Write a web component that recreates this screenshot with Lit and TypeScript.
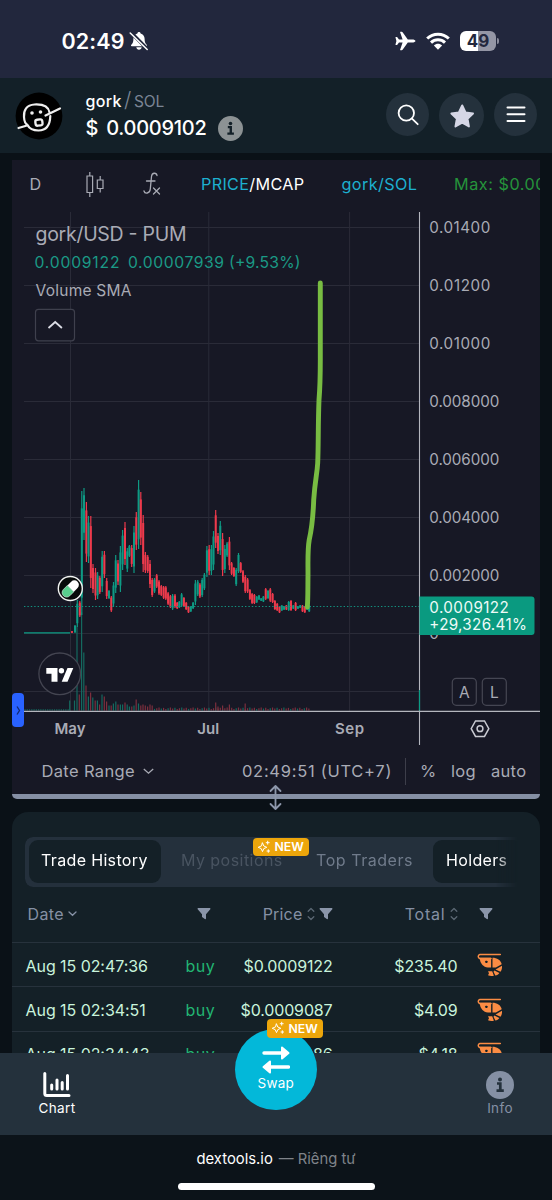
import { LitElement, html, css, svg } from "lit";
import { customElement } from "lit/decorators.js";

type Candle = [number, number, number, 0 | 1];

// x, high, low, direction (1 = up)
const CANDLES: Candle[] = [
  [72, 631, 633, 0], [75, 625, 633, 1], [77.3, 600, 627, 1], [79.8, 601, 617, 0],
  [81.8, 491, 615, 1], [84, 488, 540, 1], [86.4, 502, 562, 0], [88.5, 516, 563, 1],
  [90.8, 516, 588, 0], [93, 564, 593, 0], [95.5, 568, 600, 0], [97.6, 572, 599, 1],
  [99.8, 576, 594, 0], [102.2, 551, 592, 1], [104.4, 551, 578, 0], [106.7, 578, 599, 0],
  [109, 590, 599, 1], [111.3, 596, 612, 0], [113.5, 582, 607, 1], [115.7, 555, 593, 1],
  [118, 560, 585, 0], [120.4, 546, 592, 1], [122.6, 530, 570, 1], [125, 522, 565, 0],
  [127.3, 548, 572, 1], [129.4, 545, 557, 1], [131.7, 545, 567, 0], [134, 526, 573, 1],
  [136.3, 512, 550, 0], [138.6, 480, 549, 1], [140.8, 492, 545, 0], [143.2, 515, 572, 0],
  [145.4, 552, 573, 0], [147.7, 555, 573, 0], [150, 560, 588, 0], [152.2, 578, 597, 0],
  [154.5, 578, 593, 1], [156.7, 574, 588, 0], [159, 580, 595, 0], [161.3, 585, 596, 0],
  [163.6, 586, 599, 0], [165.8, 586, 600, 0], [168.1, 592, 605, 0], [170.4, 595, 608, 0],
  [172.6, 594, 610, 1], [175, 594, 608, 0], [177.2, 602, 609, 0], [179.3, 601, 608, 1],
  [181.6, 593, 607, 1], [183.9, 597, 607, 0], [186.2, 602, 610, 0], [188.5, 606, 613, 0],
  [190.8, 606, 612, 1], [193.1, 602, 609, 1], [195.4, 580, 605, 1], [197.7, 580, 596, 1],
  [199.9, 583, 598, 0], [202.2, 578, 597, 1], [204.4, 573, 590, 1], [206.9, 546, 577, 1],
  [209.2, 545, 575, 0], [211.4, 545, 575, 1], [213.5, 531, 570, 1], [215.7, 510, 548, 0],
  [218, 533, 554, 0], [220.3, 521, 555, 1], [222.6, 533, 576, 0], [224.8, 545, 573, 1],
  [227.1, 542, 557, 1], [229.4, 537, 570, 0], [231.6, 562, 575, 0], [233.9, 567, 577, 0],
  [236.2, 568, 586, 1], [238.5, 553, 573, 1], [240.7, 562, 573, 0], [243, 570, 583, 0],
  [245.3, 575, 593, 0], [247.6, 578, 593, 0], [249.9, 589, 600, 0], [252.1, 593, 604, 0],
  [254.4, 594, 604, 0], [256.7, 596, 603, 1], [259, 595, 600, 1], [261.2, 598, 601, 1],
  [263.4, 596, 602, 1], [265.7, 588, 600, 0], [268, 590, 599, 1], [270.3, 588, 602, 0],
  [272.6, 593, 603, 0], [274.9, 600, 610, 0], [277.2, 603, 611, 0], [279.5, 606, 613, 0],
  [281.8, 605, 611, 1], [284.1, 606, 610, 1], [286.4, 605, 610, 0], [288.7, 601, 611, 1],
  [291, 600, 611, 0], [293.3, 605, 609, 1], [295.6, 602, 611, 0], [297.9, 606, 609, 1],
  [300.2, 605, 608, 1], [302.5, 605, 612, 0], [304.8, 606, 613, 0], [307, 605, 610, 1],
  [309.2, 605, 612, 1],
];

// x, height, direction
const VOLUMES: [number, number, 0 | 1][] = [
  [69.7, 10, 1], [74.5, 10, 1], [77, 84, 1], [79.3, 16, 0], [81.6, 98, 1], [83.8, 58, 1],
  [86, 25, 0], [88.4, 14, 1], [90.6, 18, 0], [92.8, 13, 1], [95.2, 10, 0], [97.4, 10, 1],
  [99.6, 6, 0], [102, 16, 1], [104.3, 14, 0], [106.6, 9, 0], [109, 5, 1], [111.2, 5, 0],
  [113.4, 7, 1], [115.8, 9, 1], [118, 6, 0], [120.4, 6, 1], [122.6, 6, 1], [125, 8, 0],
  [127.2, 6, 1], [129.4, 4, 1], [131.8, 4, 0], [134, 5, 1], [136.2, 11, 0], [138.5, 7, 1],
  [140.8, 5, 0], [143, 6, 0], [145.3, 5, 0], [147.6, 4, 0], [150, 6, 0], [152.2, 5, 0],
  [215.7, 8, 0], [218, 4, 0], [222.6, 5, 0], [229.4, 6, 0], [245.2, 7, 0],
];

const TICKS: [number, string, number][] = [
  [227.3, "0.01400", 61], [285.3, "0.01200", 61], [343.4, "0.01000", 61], [401.5, "0.008000", 70],
  [459.5, "0.006000", 70], [517.5, "0.004000", 70], [575.5, "0.002000", 70], [633.4, "0", 9],
];

const sparkle = html`<svg width="14" height="14" viewBox="0 0 14 14" fill="none" stroke="#fff" stroke-width="1" stroke-linejoin="round" stroke-linecap="round"><path d="M5.5 3 6.8 6 9.8 7.3 6.8 8.6 5.5 11.6 4.2 8.6 1.2 7.3 4.2 6Z"/><path d="M10.7 1.2v3M9.2 2.7h3M11.3 9.7v2.6M10 11h2.6"/></svg>`;
const newBadge = html`${sparkle}<span>NEW</span>`;
const funnel = html`<svg width="14" height="13" viewBox="0 0 14 13"><path fill="#8a95a9" d="M1.3 1h11.4c.8 0 1 .8.6 1.3L9 7.3v4.2c0 .7-.7 1-1.2.6L5.4 10.3C5.1 10.1 5 9.8 5 9.5V7.3L.7 2.3C.3 1.8.5 1 1.3 1Z"/></svg>`;
const sorter = html`<svg width="8" height="14" viewBox="0 0 8 14" fill="none" stroke="#5b6773" stroke-width="1.3" stroke-linecap="round" stroke-linejoin="round"><path d="M1.2 4.2 4 1.500 6.800 4.200M1.200 9.800 4 12.500 6.800 9.800"/></svg>`;
const shrimp = html`<svg width="27" height="25" viewBox="0 0 27 25"><path d="M24.300 1.500H3.800a2 2 0 0 0 0 3.900H15" fill="none" stroke="#fb8c44" stroke-width="1.500" stroke-linecap="round"/><g fill="#fb8c44"><path d="M3.600 4.800H15.100V14.600H11.800C7.500 14.300 4 10.500 3.600 4.800Z"/><path d="M16.500 4.800c4.500 0 8.200 2.400 9.200 6.400L19.900 14.600H16.500Z"/><path d="M26 12.800c.2 2.300-.3 4.300-1.500 6l-5-2.300Z"/><path d="m18.400 17.600 5 2.300c-1.100 1.400-2.300 2.200-4 2.700l-1.900-3.900Z"/><path d="M12 18.300h4.200l1.700 4.400c-2.100.4-4.100.3-5.900-.4l1-2Z"/></g><rect x="9.300" y="7.700" width="2.200" height="2.200" rx=".6" fill="#142027"/></svg>`;
const infoGlyph = (d: number, disc: string, ink: string) => html`<svg width=${d} height=${d} viewBox="0 0 28 28"><circle cx="14" cy="14" r="14" fill=${disc}/><circle cx="14" cy="8.400" r="2" fill=${ink}/><path d="M11 12.500h3.300v6.700M10.500 19.700h7.300" fill="none" stroke=${ink} stroke-width="2.700"/></svg>`;

@customElement("status-bar")
class StatusBar extends LitElement {
  static styles = css`
    :host { display: flex; height: 77.5px; background: #22273d; color: #fff; align-items: center; box-sizing: border-box; padding: 4px 53px 0 61.5px; font-family: Inter, sans-serif; }
    svg { display: block; flex: none; }
    .time { font-size: 21.5px; font-weight: 600; letter-spacing: .1px; width: 67px; }
    .space { flex: 1; }
    .wifi { margin: 0 10px 0 10px; }
    .battery { display: flex; align-items: center; justify-content: center; width: 36px; height: 19.5px; border-radius: 6px; background: linear-gradient(90deg, #fff 50%, #9496a5 50%); color: #22273d; font-size: 17px; font-weight: 700; line-height: 20px; }
    .nub { width: 2px; height: 6px; margin-left: 1px; border-radius: 0 2px 2px 0; background: #8a8c9c; }
  `;
  render() {
    return html`
      <span class="time">02:49</span>
      <svg width="20" height="20" viewBox="0 0 20 20"><path fill="#fff" d="M10 1c.9 0 1.500.6 1.600 1.400 2.500.7 4 2.800 4 5.400 0 3.500.7 4.700 2.100 6 .6.600.3 1.400-.5 1.400H2.800c-.8 0-1.100-.8-.5-1.400 1.400-1.300 2.100-2.500 2.100-6 0-2.600 1.500-4.700 4-5.400C8.500 1.600 9.100 1 10 1ZM7.300 16.300h5.400C12.500 17.800 11.400 18.800 10 18.800s-2.500-1-2.700-2.500Z"/><path d="m2 1.500 16.800 17" stroke="#22273d" stroke-width="3.600"/><path d="m1.200 2 17 16.500" stroke="#fff" stroke-width="1.500" stroke-linecap="round"/></svg>
      <div class="space"></div>
      <svg width="21" height="20" viewBox="0 0 21 20"><path fill="#fff" d="M20.500 10c0 .9-1.600 1.500-3.300 1.500h-4.400L7.600 18.700c-.2.300-.5.500-.9.500H5.400c-.3 0-.4-.2-.3-.5l2.500-7.200H4L2.300 13.700c-.2.300-.4.400-.7.400H.8c-.3 0-.4-.2-.3-.5L1.400 10 .5 6.400c-.1-.3 0-.5.300-.5h.8c.3 0 .5.100.7.400L4 8.500h3.600L5.100 1.300c-.1-.3 0-.5.3-.5h1.300c.4 0 .7.200.9.500l5.200 7.200h4.400c1.700 0 3.300.6 3.300 1.500Z"/></svg>
      <svg class="wifi" width="24" height="18" viewBox="0 0 24 18" fill="none" stroke="#fff" stroke-width="3"><path d="M1.200 6.500C7.200.700 16.800.700 22.800 6.500"/><path d="M5 10.700c4-3.800 10-3.800 14 0"/><path fill="#fff" stroke="none" d="M7.900 13.500c2.400-2.200 5.800-2.200 8.200 0L12 17.700Z"/></svg>
      <div class="battery">49</div><div class="nub"></div>`;
  }
}

@customElement("pair-header")
class PairHeader extends LitElement {
  static styles = css`
    :host { display: flex; height: 75.5px; background: #132028; color: #fff; box-sizing: border-box; padding: 0 15px; font-family: Inter, sans-serif; }
    svg { display: block; }
    .avatar { width: 48px; height: 48px; margin-top: 14.5px; }
    .names { padding: 13px 0 0 22.5px; flex: 1; }
    .pair { display: flex; align-items: baseline; font-size: 16px; line-height: 20px; font-weight: 500; letter-spacing: .35px; }
    .slash { font-size: 21px; line-height: 18px; font-weight: 300; color: #7a8494; padding: 0 2.5px 0 2px; }
    .quote { color: #7a8494; font-weight: 400; font-size: 15.5px; letter-spacing: -.2px; }
    .price { display: flex; align-items: center; height: 33px; font-size: 20px; font-weight: 500; gap: 11px; }
    .amount { white-space: pre; word-spacing: 3px; letter-spacing: -.27px; }
    .btns { display: flex; gap: 10px; padding-top: 15.5px; align-items: flex-start; margin-right: 0; }
    .btn { width: 43px; height: 43px; border-radius: 50%; background: #24313c; display: grid; place-items: center; }
    .star { width: 45px; height: 45px; }
  `;
  render() {
    return html`
      <div class="avatar"><svg width="48" height="48" viewBox="0 0 48 48"><circle cx="24" cy="24" r="23.400" fill="#000"/><g fill="none" stroke="#eee" stroke-width="2.200" stroke-linecap="round" stroke-linejoin="round"><path d="M45 16.500 30.500 23.500M34.500 20.500C33.500 14.500 29 12 19.500 12.500 11.500 13 8.500 18 9 25c.2 4 1 6.500 3.500 8 2 4 5 5.500 11 5.500 7.500 0 11.500-4 11.800-14.500"/><path d="M3.500 36l8.500-2.500"/></g><circle cx="17" cy="21" r="1.800" fill="#eee"/><circle cx="25.500" cy="20" r="1.800" fill="#eee"/><rect x="20.500" y="27.500" width="7" height="6" rx="2" fill="none" stroke="#eee" stroke-width="2.300" transform="rotate(-8 24 31)"/></svg></div>
      <div class="names">
        <div class="pair">gork<span class="slash">/</span><span class="quote">SOL</span></div>
        <div class="price"><span class="amount">$ 0.0009102</span>${infoGlyph(25, "#8c9294", "#132028")}</div>
      </div>
      <div class="btns">
        <div class="btn"><svg width="24" height="24" viewBox="0 0 24 24" fill="none" stroke="#fff" stroke-width="1.800" stroke-linecap="round"><circle cx="10.300" cy="10" r="7.700"/><path d="m16 15.700 5.700 5.500"/></svg></div>
        <div class="btn star"><svg width="28" height="28" viewBox="0 0 28 28"><path d="m14.200 3.500 3.300 7 7.500 1-5.500 5.300 1.400 7.600-6.700-3.700-6.700 3.700 1.400-7.600-5.500-5.300 7.500-1Z" fill="#d5d6e5" stroke="#d5d6e5" stroke-width="2" stroke-linejoin="round"/></svg></div>
        <div class="btn"><svg width="20" height="18" viewBox="0 0 20 18" stroke="#fff" stroke-width="2" stroke-linecap="round"><path d="M1.500 1.500h17M1.500 8.200h17M1.500 15h17"/></svg></div>
      </div>`;
  }
}

@customElement("price-chart")
class PriceChart extends LitElement {
  static styles = css`
    :host { display: block; position: relative; height: 639px; margin: 7px 12px 0; background: #171825; border-radius: 0 0 4px 4px; font-family: Inter, sans-serif; color: #a9abb5; }
    svg { display: block; flex: none; }
    .tools { display: flex; align-items: center; height: 48px; overflow: hidden; font-size: 16.2px; white-space: nowrap; padding-left: 17.5px; box-sizing: border-box; }
    .tools > span { flex: none; }
    .interval { width: 56px; }
    .kind { width: 57px; }
    .fx { width: 58.500px; }
    .metric { width: 140.5px; color: #fff; letter-spacing: .34px; }
    .cyan { color: #1db0d0; }
    .market { width: 112.5px; color: #1db0d0; letter-spacing: .4px; }
    .max { color: #25933b; letter-spacing: .55px; }
    .canvas { width: 528px; height: 538px; }
    .range { display: flex; align-items: center; height: 48px; box-sizing: border-box; padding: 2px 0 0 29.5px; font-size: 16.5px; white-space: nowrap; }
    .dates { letter-spacing: .35px; margin-right: 8px; }
    .clock { margin-left: 88px; width: 163px; letter-spacing: .72px; }
    .rule { width: 1px; height: 27px; background: #3d3e4a; margin-right: 14px; }
    .pct { width: 31px; }
    .log { width: 40px; letter-spacing: .3px; }
    .auto { letter-spacing: .3px; }
    .edge { height: 5px; background: #858fa4; border-radius: 0 0 5px 5px; }
    .grip { position: absolute; left: 256px; bottom: -12px; }
    .drawer { position: absolute; left: 0; top: 533px; width: 12px; height: 34px; border-radius: 4px; background: #2962ff; display: grid; place-items: center; }
  `;

  private candle([x, hi, lo, up]: Candle) {
    const color = up ? "#0e9a84" : "#ee3a4c";
    const span = lo - hi;
    const pad = span > 20 ? span * 0.14 : span * 0.1;
    return svg`<path d="M${x} ${hi}V${lo}" stroke=${color} stroke-width="1.200"/><path d="M${x} ${hi + pad}V${lo - pad}" stroke=${color} stroke-width="2"/>`;
  }

  private bar(x: number, h: number, up: number) {
    return svg`<path d="M${x} 710.500v${-h}" stroke=${up ? "#14695f" : "#7c2f3e"} stroke-width="1.200"/>`;
  }

  render() {
    const tail: number[] = [];
    for (let x = 154.5; x < 311; x += 2.27) tail.push(x);
    const head: number[] = [];
    for (let x = 25; x < 69; x += 2.27) head.push(x);
    return html`
      <div class="tools">
        <span class="interval">D</span>
        <span class="kind"><svg width="18" height="25" viewBox="0 0 18 25" fill="none" stroke="#a9abb5" stroke-width="1.200"><path d="M1 4h5.600v16.500H1ZM3.800 0v4M3.800 20.500V25M11.300 8H17v8.500h-5.700ZM14.200 4v4M14.200 16.500v4"/></svg></span>
        <span class="fx"><svg width="18" height="24" viewBox="0 0 18 24" fill="none" stroke="#a9abb5" stroke-width="1.300" stroke-linecap="round"><path d="M14 3.500C13.500.500 9 .200 8.500 4.500L7.300 17c-.4 5-5.600 5-6.300 2M3.500 9H12M10.500 16l6 6M16.500 16l-6 6"/></svg></span>
        <span class="metric"><span class="cyan">PRICE</span>/MCAP</span>
        <span class="market">gork/SOL</span>
        <span class="max">Max: $0.00</span>
      </div>
      <svg class="canvas" viewBox="12 208 528 538" font-family="Inter, sans-serif">
        <g stroke="#2a2b38" stroke-width="1">
          ${[227.5, 285.5, 343.5, 401.5, 459.5, 517.5, 575.5, 633.5, 691.5].map((y) => svg`<path d=${`M24 ${y}H419`}/>`)}
          ${[70.5, 208.8, 349.6].map((x) => svg`<path d=${`M${x} 212V711`}/>`)}
        </g>
        <path d="M24 632.900H70" stroke="#0c9c84" stroke-width="1.300"/>
        ${head.map((x) => this.bar(x, 1.2, 1))}
        ${tail.map((x, i) => this.bar(x, 1.6 + (i * 7 % 5) * .35, i % 3 === 0 ? 1 : 0))}
        ${VOLUMES.map(([x, h, u]) => this.bar(x, h, u))}
        ${CANDLES.map((c) => this.candle(c))}
        <path d="M24 606.500H419" stroke="#13917f" stroke-width="1.200" stroke-dasharray="1.400 2"/>
        <path d="M320.300 283V350C320.300 378 320.500 382 319 400C318 425 318.500 445 317.700 463C317 475 315 480 313.700 500C313 520 311 532 309.200 540C307.500 550 308 560 308 575C307.800 590 308 600 307.300 607" fill="none" stroke="#78bc42" stroke-width="4.900" stroke-linecap="round" stroke-linejoin="round"/>
        <g stroke="#b4b6be" stroke-width="1.100"><path d="M419.500 212V745"/><path d="M20 711.300H540" stroke-width="1.300"/></g>
        <path d="M419.500 690V710.500" stroke="#0c9c84" stroke-width="1.200"/>
        <text x="35.500" y="240.800" font-size="19.500" fill="#a9abb5" textLength="151">gork/USD - PUM</text>
        <g font-size="15.700" fill="#1b9a86">
          <text x="34.500" y="267.500" textLength="85">0.0009122</text>
          <text x="128" y="267.500" textLength="96">0.00007939</text>
          <text x="229" y="267.500" textLength="71.500">(+9.53%)</text>
        </g>
        <text x="35.500" y="295.500" font-size="15.500" fill="#a9abb5" textLength="96">Volume SMA</text>
        <rect x="35.500" y="309.300" width="39" height="31.500" rx="3" fill="#171825" stroke="#3f404d" stroke-width="1.200"/>
        <path d="m48.500 328 6.700-6 6.700 6" fill="none" stroke="#dcdde5" stroke-width="1.800"/>
        <g font-size="15.200" fill="#a9abb5">
          ${TICKS.map(([y, t, w]) => svg`<text x="429.300" y=${y + 5.8} textLength=${w}>${t}</text>`)}
        </g>
        <path d="M419.500 596.500H531.500a3 3 0 0 1 3 3V632a3 3 0 0 1-3 3H419.500Z" fill="#0a9a80"/>
        <g font-size="15.200" fill="#eefaf7"><text x="429.300" y="613" textLength="79.500">0.0009122</text><text x="429.300" y="630.300" textLength="97.500">+29,326.41%</text></g>
        <g fill="#171825" stroke="#454653" stroke-width="1.200"><rect x="452.300" y="678.300" width="24" height="27" rx="4"/><rect x="482.300" y="678.300" width="24" height="27" rx="4"/></g>
        <g font-size="15.500" fill="#a9abb5" text-anchor="middle"><text x="464.300" y="697.500">A</text><text x="494.300" y="697.500">L</text></g>
        <g font-size="15" font-weight="600" fill="#a9abb5"><text x="54.500" y="734.300" textLength="31">May</text><text x="197.300" y="734.300" textLength="22">Jul</text><text x="335" y="734.300" textLength="29">Sep</text></g>
        <g fill="none" stroke="#c9cad2" stroke-width="1.500"><path d="M475.500 721h9l4.300 7.700-4.300 7.700h-9l-4.300-7.700Z"/><circle cx="480" cy="728.700" r="2.900"/></g>
        <circle cx="59.700" cy="673.800" r="20.800" fill="#171825" stroke="#444551" stroke-width="1.300"/>
        <g fill="#fff"><path d="M46.300 668H57.500V681.700H51.500V673.700H46.300ZM61.700 681.700l5.800-13.700h5.800l-5.800 13.700Z"/><circle cx="61.400" cy="670.700" r="2.700"/></g>
        <circle cx="70.300" cy="588.500" r="12" fill="#070a0a" stroke="#f1f3f1" stroke-width="1.400"/>
        <g transform="rotate(-45 70.500 588.700)"><path d="M70.500 584.200h5.500a4.500 4.500 0 0 1 0 9h-5.500Z" fill="#fff"/><path d="M70.500 584.200H65a4.500 4.500 0 0 0 0 9h5.500Z" fill="#59cf8e" stroke="#d8f4e4" stroke-width=".6"/></g>
      </svg>
      <div class="range">
        <span class="dates">Date Range</span>
        <svg width="11" height="7" viewBox="0 0 11 7" fill="none" stroke="#a9abb5" stroke-width="1.300"><path d="m.8 1 4.700 4.200L10.200 1"/></svg>
        <span class="clock">02:49:51 (UTC+7)</span>
        <span class="rule"></span><span class="pct">%</span><span class="log">log</span><span class="auto">auto</span>
      </div>
      <div class="edge"></div>
      <svg class="grip" width="15" height="27" viewBox="0 0 15 27" fill="none" stroke="#8d97ab" stroke-width="1.800" stroke-linecap="round" stroke-linejoin="round"><path d="M7.500 2v23M2.500 7l5-5 5 5M2.500 20l5 5 5-5"/></svg>
      <div class="drawer"><svg width="5" height="9" viewBox="0 0 5 9" fill="none" stroke="#122a70" stroke-width="1.300"><path d="M1 .5 3.500 4.500 1 8.500"/></svg></div>`;
  }
}

@customElement("trade-table")
class TradeTable extends LitElement {
  static styles = css`
    :host { display: block; margin: 13px 12px 0; height: 241px; overflow: hidden; border-radius: 16px 16px 0 0; background: #142027; font-family: Inter, sans-serif; }
    svg { display: block; }
    .wrap { position: relative; padding: 24.5px 12.5px 0; height: 51px; }
    .tabs { display: flex; align-items: center; height: 50.5px; border-radius: 8px; background: #24303c; box-sizing: border-box; padding: 0 4px; font-size: 16px; white-space: nowrap; -webkit-mask: linear-gradient(90deg, #000 93.5%, transparent 98%); mask: linear-gradient(90deg, #000 93.5%, transparent 98%); color: #707b8b; }
    .tab { flex: none; height: 43px; line-height: 41px; border-radius: 9px; box-sizing: border-box; }
    .on { background: #142027; color: #fff; }
    .history { width: 132.5px; padding-left: 12.5px; letter-spacing: .35px; }
    .mine { color: #495461; padding-left: 20px; width: 155px; letter-spacing: .45px; }
    .top { width: 117px; letter-spacing: .55px; }
    .holders { padding-left: 13px; width: 90px; letter-spacing: .35px; }
    .badge { position: absolute; left: 240.5px; top: 25.5px; display: flex; align-items: center; gap: 4px; box-sizing: border-box; width: 56px; height: 18.5px; border-radius: 4px; padding-left: 4px; background: #eda60b; color: #fff; font-size: 12.3px; font-weight: 600; }
    .row, .head { display: grid; grid-template-columns: 160px 31px 116px 125px 45px; align-items: center; padding-left: 13.5px; border-bottom: 1px solid #27323c; box-sizing: border-box; white-space: nowrap; }
    .head { height: 55.5px; color: #8590a4; font-size: 16px; padding-bottom: 2px; }
    .row { height: 44.4px; color: #c9f4dc; font-size: 16px; padding-top: 2px; }
    .cell { display: flex; align-items: center; }
    .date { gap: 4px; padding-left: 2px; letter-spacing: .4px; }
    .mid { padding-left: 11px; }
    .price { justify-content: flex-end; gap: 4px; letter-spacing: .2px; }
    .total { justify-content: flex-end; gap: 4px; letter-spacing: .8px; }
    .act { padding-left: 21px; }
    .buy { color: #22b573; letter-spacing: .5px; }
    .num { text-align: right; letter-spacing: -.15px; }
    .day { letter-spacing: -.06px; }
    .icon { padding-left: 18.500px; }
  `;
  render() {
    const rows = [
      ["Aug 15 02:47:36", "$0.0009122", "$235.40"],
      ["Aug 15 02:34:51", "$0.0009087", "$4.09"],
      ["Aug 15 02:34:43", "$0.0009086", "$4.18"],
    ];
    return html`
      <div class="wrap">
        <div class="tabs">
          <span class="tab on history">Trade History</span><span class="tab mine">My positions</span><span class="tab top">Top Traders</span><span class="tab on holders">Holders</span>
        </div>
        <div class="badge">${newBadge}</div>
      </div>
      <div class="head">
        <div class="cell date">Date<svg width="9" height="6" viewBox="0 0 9 6" fill="none" stroke="#8590a4" stroke-width="1.300" stroke-linecap="round"><path d="m1 1 3.500 3.300L8 1"/></svg></div>
        <div class="cell mid">${funnel}</div>
        <div class="cell price">Price${sorter}${funnel}</div>
        <div class="cell total">Total${sorter}</div>
        <div class="cell act">${funnel}</div>
      </div>
      ${rows.map(([d, p, t]) => html`<div class="row"><span class="day">${d}</span><span class="buy">buy</span><span class="num">${p}</span><span class="num">${t}</span><span class="icon">${shrimp}</span></div>`)}`;
  }
}

@customElement("bottom-nav")
class BottomNav extends LitElement {
  static styles = css`
    :host { display: block; font-family: Inter, sans-serif; color: #fff; }
    svg { display: block; }
    .nav { position: relative; display: flex; justify-content: space-between; height: 81.5px; background: #24313c; box-sizing: border-box; padding: 18px 38px 0 37px; font-size: 13.5px; }
    .item { display: flex; flex-direction: column; align-items: center; width: 40px; line-height: 18px; gap: 1px; letter-spacing: .35px; }
    .info { color: #8590a4; width: 28px; gap: 0; }
    .swap { position: absolute; left: 235px; top: -24.5px; width: 81.5px; height: 81.5px; border-radius: 50%; background: #03b8d9; display: flex; flex-direction: column; align-items: center; box-sizing: border-box; padding-top: 16px; line-height: 18px; font-size: 13.5px; letter-spacing: .2px; }
    .badge { position: absolute; left: 266.5px; top: -34px; display: flex; align-items: center; gap: 4px; box-sizing: border-box; width: 56px; height: 18.5px; border-radius: 4px; padding-left: 4px; background: #eda60b; color: #fff; font-size: 12.3px; font-weight: 600; }
    .foot { height: 65.5px; background: #0c1319; display: flex; flex-direction: column; align-items: center; }
    .url { font-size: 14.8px; line-height: 20px; margin: 14.5px 0 14px; white-space: nowrap; }
    .mode { color: #7f8389; padding-left: 6px; }
    .home { width: 197px; height: 7px; border-radius: 4px; background: #fff; }
  `;
  render() {
    return html`
      <div class="nav">
        <div class="item"><svg width="28" height="27" viewBox="0 0 28 27" fill="none" stroke="#fff" stroke-width="3" stroke-linecap="round" stroke-linejoin="round"><path d="M1.800 2.500V22.500q0 2 2 2H26M8.700 14v4M14 9v9M19.200 11.500v6.500M24.500 4.500V18"/></svg><span>Chart</span></div>
        <div class="item info">${infoGlyph(28, "#8590a4", "#24313c")}<span>Info</span></div>
        <div class="swap"><svg width="28" height="29" viewBox="0 0 28 29" fill="#fff" stroke="#fff" stroke-linejoin="round" stroke-linecap="round"><path d="M2 8H20M8 22H26.500" stroke-width="3.400"/><path d="m20 2.500 6.500 5.500L20 13.500ZM8 16.500 1.500 22 8 27.500Z" stroke-width="2"/></svg><span>Swap</span></div>
        <div class="badge">${newBadge}</div>
      </div>
      <div class="foot">
        <div class="url">dextools.io<span class="mode">— Riêng tư</span></div>
        <div class="home"></div>
      </div>`;
  }
}

@customElement("app-root")
class AppRoot extends LitElement {
  static styles = css`
    :host { display: block; width: 552px; height: 1200px; overflow: hidden; background: #0a1117; }
  `;
  render() {
    return html`<status-bar></status-bar><pair-header></pair-header><price-chart></price-chart><trade-table></trade-table><bottom-nav></bottom-nav>`;
  }
}
